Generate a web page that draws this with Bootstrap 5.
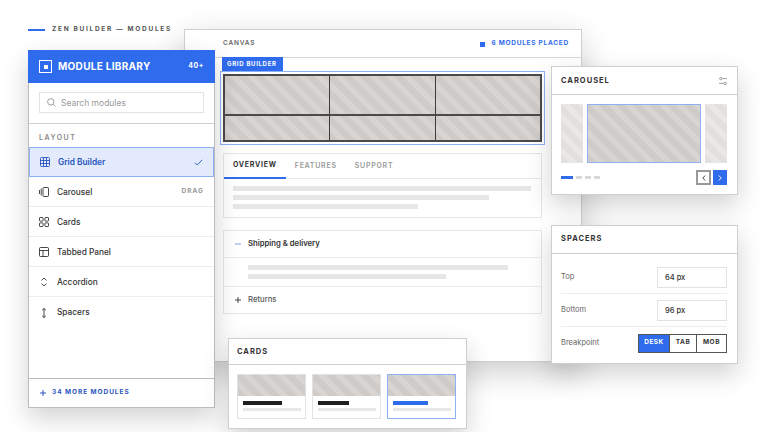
<!DOCTYPE html>
<html lang="en">
<head>
    <meta charset="UTF-8">
    <meta name="viewport" content="width=device-width, initial-scale=1.0">
    <title>Zen Builder - Modules</title>
    <link href="https://cdn.jsdelivr.net/npm/bootstrap@5.3.3/dist/css/bootstrap.min.css" rel="stylesheet">
    <style>
        body { background: #fff; font-family: "Inter", "Liberation Sans", sans-serif; color: #1e1e1e; overflow: hidden; }
        .stage { position: relative; width: 768px; height: 432px; overflow: hidden; }
        .eyebrow { position: absolute; left: 28px; top: 24px; height: 12px; font-size: 6.5px; font-weight: 700; letter-spacing: 1.7px; color: #555; }
        .eyebrow-line { width: 17px; height: 2px; background: #2f6bed; margin-right: 7px; }

        /* windows */
        .win { position: absolute; border-radius: 0; border: 1px solid #cfcfcf; background: #fff; box-shadow: 0 10px 24px rgba(0,0,0,.18); }
        .win-canvas { left: 184px; top: 29px; width: 398px; height: 333px; box-shadow: 0 10px 30px rgba(0,0,0,.2); }
        .win-library { left: 28px; top: 50px; width: 187px; height: 358px; border-color: #bdbdbd; }
        .win-carousel { left: 551px; top: 66px; width: 187px; height: 129px; }
        .win-spacers { left: 551px; top: 225px; width: 187px; height: 139px; }
        .win-cards { left: 228px; top: 338px; width: 239px; height: 91px; }
        .win-head { height: 28px; border-bottom: 1px solid #cfcfcf; padding: 0 10px 0 9px; font-size: 7.5px; font-weight: 700; letter-spacing: 1px; color: #333; flex: none; }
        .win-cards .win-head { height: 26px; padding-left: 8px; }
        .win-spacers .win-head { padding-bottom: 1px; }

        /* library */
        .lib-head { height: 33px; background: #2f6bed; color: #fff; padding: 0 11px; margin: -1px -1px 0; width: calc(100% + 2px); flex: none; }
        .lib-logo { width: 13px; height: 13px; border: 1px solid #fff; margin-right: 6px; }
        .lib-logo span { width: 4px; height: 4px; background: #fff; }
        .lib-title { font-size: 10px; font-weight: 700; letter-spacing: .3px; }
        .lib-count { font-size: 7px; font-weight: 700; letter-spacing: .5px; }
        .lib-search { padding: 9px 10px 10px; border-bottom: 1px solid #cfcfcf; flex: none; }
        .search-box { height: 21px; border: 1px solid #e2e2e2; padding: 0 7px; gap: 5px; }
        .search-box span { font-size: 8.5px; color: #9a9a9a; padding-top: 1px; }
        .lib-label { font-size: 7px; font-weight: 600; letter-spacing: 1.5px; color: #888; padding: 9px 10px 5px; line-height: 9px; flex: none; }
        .mod-item { height: 30px; padding: 1px 10px 0; border-radius: 0 !important; border-color: #ececec; font-size: 8.3px; font-weight: 500; color: #333; gap: 8px; }
        .mod-item.active { background: #e2eafb; border: 1px solid #8fb0f5 !important; padding: 0 10px; color: #2a55c0; font-weight: 600; }
        .mod-item svg { flex: none; }
        .mod-tag { font-size: 6.5px; font-weight: 700; letter-spacing: 1px; color: #999; }
        .lib-foot { height: 29px; border-top: 1px solid #bdbdbd; padding: 0 11px; gap: 6px; font-size: 6.5px; font-weight: 700; letter-spacing: .95px; color: #2a55c0; flex: none; }

        /* canvas */
        .canvas-head { height: 28px; border-bottom: 1px solid #d8d8d8; padding: 1px 12px 0 38px; font-size: 6.5px; font-weight: 600; letter-spacing: .8px; color: #666; flex: none; }
        .canvas-count { color: #2f6bed; font-weight: 700; letter-spacing: .75px; gap: 6px; }
        .canvas-count i { width: 5px; height: 5px; background: #2f6bed; display: block; }
        .canvas-body { padding: 0 39px 0 35px; }
        .grid-tag { width: 61px; height: 14px; background: #2f6bed; color: #fff; font-size: 6px; font-weight: 700; letter-spacing: .7px; padding-left: 5px; line-height: 13px; margin: -1px 0 0 2px; }
        .grid-frame { width: 325px; height: 74px; border: 1px solid #8fb0f5; padding: 2px; }
        .grid-inner { display: grid; grid-template-columns: 105px 106px 1fr; grid-template-rows: 40px 1fr; height: 100%; border: 2px solid #4a4a4a; }
        .grid-inner div { background: repeating-linear-gradient(45deg, #cfcbc9 0 6px, #d7d4d2 6px 12px); border-right: 1px solid #3c3c3c; border-bottom: 2px solid #4a4a4a; }
        .grid-inner div:nth-child(3n) { border-right: 0; }
        .grid-inner div:nth-child(n+4) { border-bottom: 0; }
        .tabs-box { width: 319px; height: 65px; border: 1px solid #e6e6e6; margin: 8px 0 0 3px; }
        .tab-bar { height: 25px; border-bottom: 1px solid #e6e6e6; }
        .tab-link { height: 25px; padding: 0 9px 1px; font-size: 7px; font-weight: 600; letter-spacing: .75px; color: #999; text-decoration: none; }
        .tab-link.active { color: #333; font-weight: 700; border-bottom: 2px solid #2f6bed; }
        .skel { display: block; height: 5px; background: #e9e6e6; margin-bottom: 4px; }
        .skel-area { padding: 7px 9px 0; }
        .acc-box { width: 319px; height: 84px; border: 1px solid #e6e6e6; margin: 12px 0 0 3px; }
        .acc-row { height: 26px; padding: 0 11px; gap: 7px; font-size: 7.7px; }
        .acc-row b { font-weight: 600; color: #333; }
        .acc-row span { color: #555; font-weight: 500; }
        .acc-body { height: 30px; border-top: 1px solid #ececec; border-bottom: 1px solid #ececec; padding: 7px 24px 0; }

        /* carousel */
        .slide-row { padding: 9px 10px 0 9px; gap: 4px; height: 68px; }
        .slide-side { width: 22px; height: 59px; background: repeating-linear-gradient(45deg, #e2e0df 0 6px, #e9e8e7 6px 12px); }
        .slide-main { width: 114px; height: 59px; border: 1px solid #8fb0f5; background: repeating-linear-gradient(45deg, #cfcbc9 0 6px, #d7d4d2 6px 12px); }
        .slide-ctrl { padding: 7px 10px 0 9px; }
        .pip { width: 6px; height: 3px; background: #d8d8d8; margin-right: 3px; }
        .pip.on { width: 12px; background: #2f6bed; }
        .arrow-btn { width: 15px; height: 15px; padding: 0; border-radius: 0; border: 2px solid #999; background: #fff; }
        .arrow-btn.next { width: 14px; background: #2f6bed; border: 0; margin-left: 2px; }

        /* spacers */
        .sp-body { padding: 7px 10px 0 9px; }
        .sp-row { height: 33px; border-bottom: 1px solid #ececec; font-size: 7.5px; color: #666; }
        .sp-row.last { border-bottom: 0; height: 32px; }
        .sp-input { width: 70px; height: 21px; border: 1px solid #e2e2e2; padding: 0 7px; font-size: 7.5px; font-weight: 500; color: #333; line-height: 19px; }
        .seg { border: 1px solid #555; }
        .seg span { height: 17px; font-size: 6.5px; font-weight: 700; letter-spacing: .5px; color: #333; border-left: 1px solid #555; }
        .seg span:nth-child(1) { width: 30px; background: #2f6bed; color: #fff; border-left: 0; }
        .seg span:nth-child(2) { width: 27px; }
        .seg span:nth-child(3) { width: 30px; }

        /* cards */
        .mini-row { padding: 9px 10px 0 8px; gap: 6px; }
        .mini { width: 69px; height: 45px; border: 1px solid #e2e2e2; }
        .mini.on { border-color: #8fb0f5; }
        .mini-img { height: 21px; background: repeating-linear-gradient(45deg, #cfcbc9 0 6px, #d7d4d2 6px 12px); }
        .mini-bar { height: 4px; margin: 5px 0 3px 5px; background: #1e1e1e; }
        .mini.on .mini-bar { background: #2f6bed; }
        .mini-sub { height: 3px; margin: 0 4px 0 5px; background: #e9e6e6; }
    </style>
</head>
<body>
<div class="stage">

    <div class="eyebrow d-flex align-items-center">
        <div class="eyebrow-line"></div>ZEN BUILDER — MODULES
    </div>

    <!-- canvas -->
    <div class="win win-canvas d-flex flex-column">
        <div class="canvas-head d-flex align-items-center justify-content-between">
            <span>CANVAS</span>
            <span class="canvas-count d-flex align-items-center"><i></i>6 MODULES PLACED</span>
        </div>
        <div class="canvas-body">
            <div class="grid-tag">GRID BUILDER</div>
            <div class="grid-frame">
                <div class="grid-inner"><div></div><div></div><div></div><div></div><div></div><div></div></div>
            </div>
            <div class="tabs-box">
                <div class="tab-bar nav d-flex">
                    <a class="tab-link active d-flex align-items-center" href="#">OVERVIEW</a>
                    <a class="tab-link d-flex align-items-center" href="#">FEATURES</a>
                    <a class="tab-link d-flex align-items-center" href="#">SUPPORT</a>
                </div>
                <div class="skel-area">
                    <span class="skel" style="width: 298px"></span>
                    <span class="skel" style="width: 256px"></span>
                    <span class="skel" style="width: 185px"></span>
                </div>
            </div>
            <div class="acc-box">
                <div class="acc-row d-flex align-items-center">
                    <svg width="6" height="6" viewBox="0 0 6 6"><path d="M0 3h6" stroke="#7fa3f2" stroke-width="1"/></svg>
                    <b>Shipping &amp; delivery</b>
                </div>
                <div class="acc-body">
                    <span class="skel" style="width: 260px"></span>
                    <span class="skel" style="width: 198px"></span>
                </div>
                <div class="acc-row d-flex align-items-center">
                    <svg width="6" height="6" viewBox="0 0 6 6"><path d="M0 3h6M3 0v6" stroke="#444" stroke-width="1"/></svg>
                    <span>Returns</span>
                </div>
            </div>
        </div>
    </div>

    <!-- module library -->
    <div class="win win-library d-flex flex-column">
        <div class="lib-head d-flex align-items-center">
            <div class="lib-logo d-flex align-items-center justify-content-center"><span></span></div>
            <span class="lib-title">MODULE LIBRARY</span>
            <span class="lib-count ms-auto">40+</span>
        </div>
        <div class="lib-search">
            <div class="search-box d-flex align-items-center">
                <svg width="9" height="9" viewBox="0 0 9 9" fill="none" stroke="#888" stroke-width=".8"><circle cx="3.8" cy="3.8" r="3.2"/><path d="M6.2 6.2L8.6 8.6"/></svg>
                <span>Search modules</span>
            </div>
        </div>
        <div class="lib-label">LAYOUT</div>
        <div class="list-group list-group-flush">
            <div class="list-group-item mod-item active d-flex align-items-center">
                <svg width="10" height="10" viewBox="0 0 10 10" fill="none" stroke="#2a55c0" stroke-width=".9"><rect x=".5" y=".5" width="9" height="9" rx="1"/><path d="M3.5 .5v9M6.5 .5v9M.5 3.5h9M.5 6.5h9"/></svg>
                <span>Grid Builder</span>
                <svg class="ms-auto" width="9" height="7" viewBox="0 0 9 7" fill="none" stroke="#2a55c0" stroke-width=".9"><path d="M.8 3.6L3.2 6 8.2 .8"/></svg>
            </div>
            <div class="list-group-item mod-item d-flex align-items-center">
                <svg width="10" height="10" viewBox="0 0 10 10" fill="none" stroke="#333" stroke-width=".9"><rect x="4" y=".5" width="5.5" height="9" rx=".8"/><path d="M2.2 1.5v7M.5 3v4"/></svg>
                <span>Carousel</span>
                <span class="mod-tag ms-auto">DRAG</span>
            </div>
            <div class="list-group-item mod-item d-flex align-items-center">
                <svg width="10" height="10" viewBox="0 0 10 10" fill="none" stroke="#333" stroke-width=".9"><rect x=".5" y=".5" width="3.6" height="3.6" rx=".6"/><rect x="5.9" y=".5" width="3.6" height="3.6" rx=".6"/><rect x=".5" y="5.9" width="3.6" height="3.6" rx=".6"/><rect x="5.9" y="5.9" width="3.6" height="3.6" rx=".6"/></svg>
                <span>Cards</span>
            </div>
            <div class="list-group-item mod-item d-flex align-items-center">
                <svg width="10" height="10" viewBox="0 0 10 10" fill="none" stroke="#333" stroke-width=".9"><rect x=".5" y=".5" width="9" height="9" rx="1"/><path d="M.5 3.5h9M4 3.5v6"/></svg>
                <span>Tabbed Panel</span>
            </div>
            <div class="list-group-item mod-item d-flex align-items-center">
                <svg width="10" height="10" viewBox="0 0 10 10" fill="none" stroke="#333" stroke-width=".9"><path d="M2.5 3.4L5 1l2.5 2.4M2.5 6.6L5 9l2.5-2.4"/></svg>
                <span>Accordion</span>
            </div>
            <div class="list-group-item mod-item d-flex align-items-center">
                <svg width="10" height="10" viewBox="0 0 10 10" fill="none" stroke="#333" stroke-width=".9"><path d="M5 .5v9M3.2 2.2L5 .5l1.8 1.7M3.2 7.8L5 9.5l1.8-1.7"/></svg>
                <span>Spacers</span>
            </div>
        </div>
        <div class="lib-foot mt-auto d-flex align-items-center">
            <svg width="6" height="6" viewBox="0 0 6 6"><path d="M0 3h6M3 0v6" stroke="#2a55c0" stroke-width="1"/></svg>
            <span>34 MORE MODULES</span>
        </div>
    </div>

    <!-- carousel -->
    <div class="win win-carousel d-flex flex-column">
        <div class="win-head d-flex align-items-center justify-content-between">
            <span>CAROUSEL</span>
            <svg width="8" height="8" viewBox="0 0 8 8" fill="none" stroke="#777" stroke-width=".7"><path d="M3.4 1.6H8M0 6.4h4.6"/><circle cx="1.8" cy="1.6" r="1.2"/><circle cx="6.2" cy="6.4" r="1.2"/></svg>
        </div>
        <div class="slide-row d-flex">
            <div class="slide-side"></div>
            <div class="slide-main"></div>
            <div class="slide-side"></div>
        </div>
        <div class="slide-ctrl d-flex align-items-center">
            <div class="pip on"></div><div class="pip"></div><div class="pip"></div><div class="pip"></div>
            <button class="btn arrow-btn ms-auto d-flex align-items-center justify-content-center" type="button">
                <svg width="4" height="6" viewBox="0 0 4 6" fill="none" stroke="#333" stroke-width=".9"><path d="M3.2 .5L.8 3l2.4 2.5"/></svg>
            </button>
            <button class="btn arrow-btn next d-flex align-items-center justify-content-center" type="button">
                <svg width="4" height="6" viewBox="0 0 4 6" fill="none" stroke="#fff" stroke-width=".9"><path d="M.8 .5L3.2 3 .8 5.5"/></svg>
            </button>
        </div>
    </div>

    <!-- spacers -->
    <div class="win win-spacers d-flex flex-column">
        <div class="win-head d-flex align-items-center">SPACERS</div>
        <div class="sp-body">
            <div class="sp-row d-flex align-items-center justify-content-between"><span>Top</span><div class="sp-input">64 px</div></div>
            <div class="sp-row d-flex align-items-center justify-content-between"><span>Bottom</span><div class="sp-input">96 px</div></div>
            <div class="sp-row last d-flex align-items-center justify-content-between">
                <span>Breakpoint</span>
                <div class="seg d-flex">
                    <span class="d-flex align-items-center justify-content-center">DESK</span>
                    <span class="d-flex align-items-center justify-content-center">TAB</span>
                    <span class="d-flex align-items-center justify-content-center">MOB</span>
                </div>
            </div>
        </div>
    </div>

    <!-- cards -->
    <div class="win win-cards d-flex flex-column">
        <div class="win-head d-flex align-items-center">CARDS</div>
        <div class="mini-row d-flex">
            <div class="mini"><div class="mini-img"></div><div class="mini-bar" style="width: 39px"></div><div class="mini-sub"></div></div>
            <div class="mini"><div class="mini-img"></div><div class="mini-bar" style="width: 31px"></div><div class="mini-sub"></div></div>
            <div class="mini on"><div class="mini-img"></div><div class="mini-bar" style="width: 35px"></div><div class="mini-sub"></div></div>
        </div>
    </div>

</div>
<script src="https://cdn.jsdelivr.net/npm/bootstrap@5.3.3/dist/js/bootstrap.bundle.min.js"></script>
</body>
</html>
